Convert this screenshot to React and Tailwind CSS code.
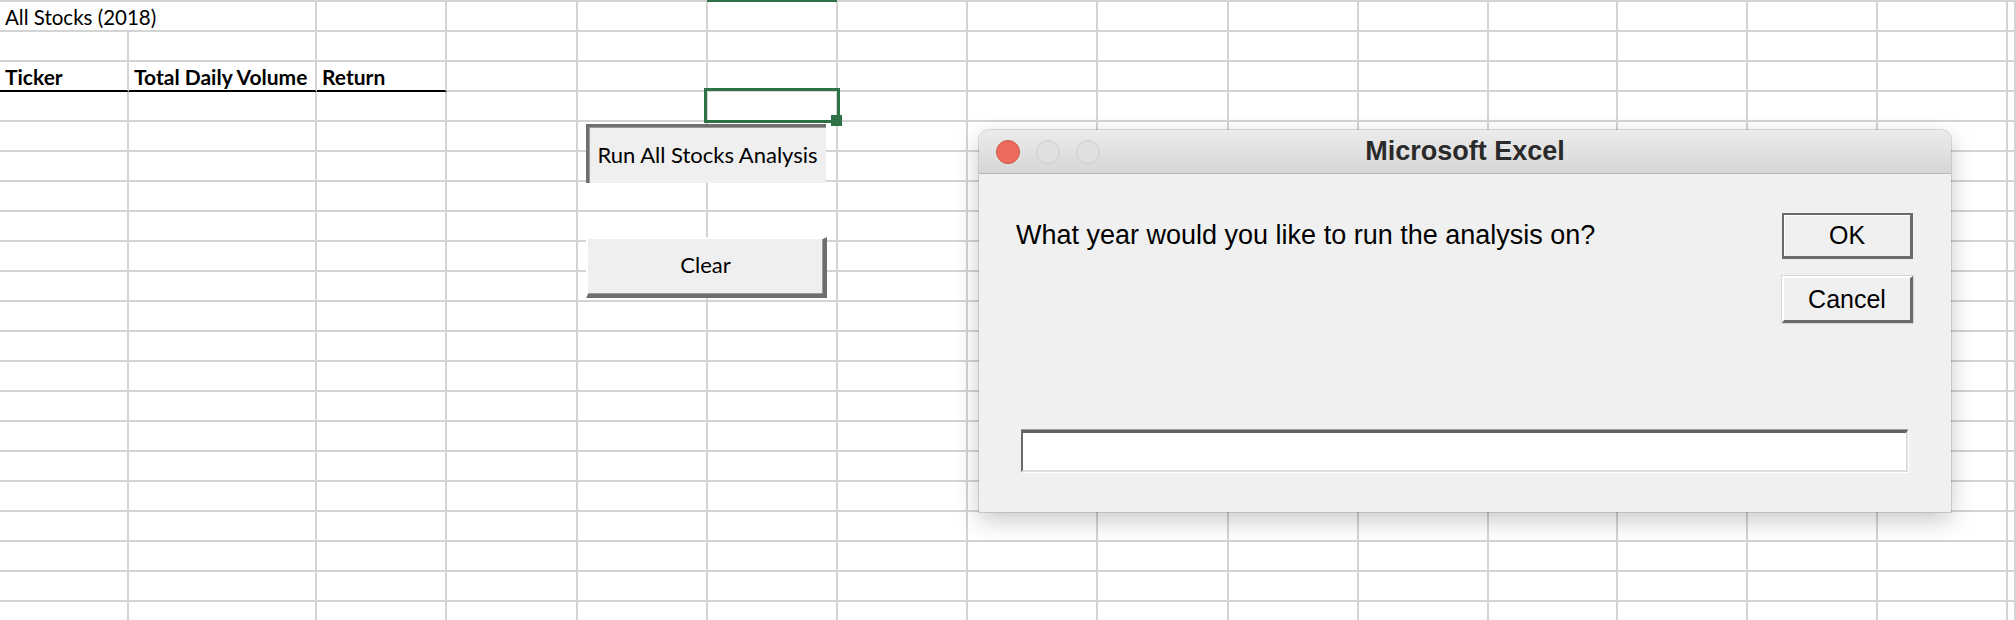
import React from "react";

// column widths of the sheet, in px (last column fills the rest)
const colWidths = [
  "w-[129px]", "w-[188px]", "w-[130px]", "w-[131px]", "w-[130px]",
  "w-[130px]", "w-[130px]", "w-[130px]", "w-[131px]", "w-[130px]",
  "w-[130px]", "w-[129px]", "w-[130px]", "w-[130px]", "w-[130px]",
];

const ROWS = 21;

const Cell = ({ w, children, noRight, blackBottom, bold }) => (
  <div
    className={
      (w || "flex-1") +
      " shrink-0 h-full flex items-end pl-[5px] pb-[3px] whitespace-nowrap border-b-2 " +
      (noRight ? "" : "border-r-2 border-r-[#d4d4d4] ") +
      (blackBottom ? "border-b-black " : "border-b-[#d4d4d4] ") +
      (bold ? "font-bold text-[21px]" : "")
    }
  >
    {children}
  </div>
);

const SheetRow = ({ index }) => {
  const cells = [];
  for (let c = 0; c < colWidths.length; c++) {
    let content = null;
    let noRight = false;
    let blackBottom = false;
    let bold = false;
    if (index === 0 && c === 0) {
      content = "All Stocks (2018)";
      noRight = true;
    }
    if (index === 2 && c < 3) {
      content = ["Ticker", "Total Daily Volume", "Return"][c];
      blackBottom = true;
      bold = true;
    }
    cells.push(
      <Cell key={c} w={colWidths[c]} noRight={noRight} blackBottom={blackBottom} bold={bold}>
        {content}
      </Cell>
    );
  }
  cells.push(<Cell key="last" />);
  return <div className="flex h-[30px] leading-none">{cells}</div>;
};

const Dialog = () => (
  <div className="absolute left-[979px] top-[130px] w-[972px] h-[382px] flex flex-col bg-[#f0f0f0] rounded-t-[10px] shadow-[0_0_0_1px_rgba(0,0,0,0.12),0_8px_24px_rgba(0,0,0,0.22)] font-['Liberation_Sans',Arial,sans-serif] text-black">
    <div className="relative h-[44px] shrink-0 flex items-center pl-[17px] gap-[16px] rounded-t-[10px] bg-gradient-to-b from-[#ececec] to-[#d6d6d6] border-b border-[#b9b9b9]">
      <div className="w-[24px] h-[24px] rounded-full bg-[#ed6a5e] border border-[#d25447]" />
      <div className="w-[24px] h-[24px] rounded-full bg-[#e0e0e0] border border-[#cdcdcd]" />
      <div className="w-[24px] h-[24px] rounded-full bg-[#e0e0e0] border border-[#cdcdcd]" />
      <div className="absolute inset-0 flex items-center justify-center text-[27px] font-bold text-[#2a2a2a]">
        Microsoft Excel
      </div>
    </div>
    <div className="flex-1 flex flex-col pl-[37px] pr-[38px] pt-[39px] pb-[40px]">
      <div className="flex justify-between">
        <p className="mt-[9px] text-[27px] leading-none">
          What year would you like to run the analysis on?
        </p>
        <div className="flex flex-col gap-[17px] w-[131px]">
          <button className="h-[46px] bg-[#f0f0f0] text-[25px] leading-none border-t-2 border-l-2 border-r-[3px] border-b-[3px] border-[#6b6b6b] shadow-[inset_1px_1px_0_#fff]">
            OK
          </button>
          <button className="h-[47px] bg-[#f0f0f0] text-[25px] leading-none border-t-2 border-l-2 border-white border-r-[3px] border-b-[3px] border-r-[#6b6b6b] border-b-[#6b6b6b] shadow-[0_0_0_1px_#d6d6d6]">
            Cancel
          </button>
        </div>
      </div>
      <div className="mt-auto mx-[5px] h-[42px] bg-white border-t-[3px] border-l-2 border-t-[#626262] border-l-[#6a6a6a] border-r-2 border-b-2 border-r-[#dedede] border-b-[#dedede] shadow-[1px_1px_0_#fff,0_-1px_0_#a0a0a0]" />
    </div>
  </div>
);

export default function App() {
  const rows = [];
  for (let i = 0; i < ROWS; i++) rows.push(<SheetRow key={i} index={i} />);

  return (
    <div className="relative w-[2016px] h-[620px] overflow-hidden bg-white font-['Lato',sans-serif] text-[20.5px] text-black">
      <div className="h-[2px] bg-[#d4d4d4]" />
      {rows}

      {/* selected column marker at the top */}
      <div className="absolute left-[707px] top-0 w-[130px] h-[2px] bg-[#2e7147]" />

      {/* active cell */}
      <div className="absolute left-[704px] top-[88px] w-[136px] h-[35px] border-[3px] border-[#2e7147]" />
      <div className="absolute left-[831px] top-[115px] w-[11px] h-[11px] bg-[#2e7147]" />

      {/* form buttons */}
      <button className="absolute left-[586px] top-[124px] w-[240px] h-[59px] bg-[#efefef] border-t-[3px] border-l-[3px] border-[#6f6f6f] shadow-[inset_1px_1px_0_#9a9a9a] text-[22px] leading-none">
        Run All Stocks Analysis
      </button>
      <button className="absolute left-[586px] top-[237px] w-[241px] h-[61px] pb-[4px] bg-[#efefef] border-t-2 border-l-2 border-white border-r-4 border-b-4 border-r-[#6e6e6e] border-b-[#6e6e6e] shadow-[inset_-1px_-1px_0_#999] text-[22px] leading-none">
        Clear
      </button>

      <Dialog />
    </div>
  );
}
